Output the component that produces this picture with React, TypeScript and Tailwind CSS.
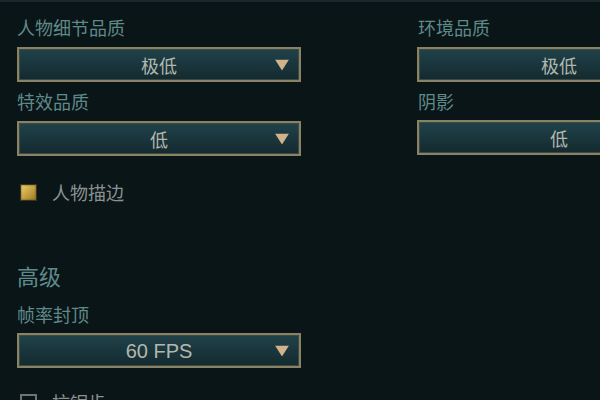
const font = { fontFamily: '"Noto Sans CJK SC", "Noto Sans", sans-serif' };

function Dropdown({ value, latin = false }: { value: string; latin?: boolean }) {
  return (
    <div className="relative flex h-[35px] w-[284px] shrink-0 items-center justify-center border-2 border-[#8a8264] bg-gradient-to-b from-[#21424a] to-[#132a2f] shadow-[inset_0_0_0_1px_#3c4a44]">
      <span
        className={
          latin
            ? "text-[20px] leading-[24px] text-[#b3b8ae]"
            : "text-[18px] leading-[24px] text-[#b3b8ae]"
        }
        style={latin ? { fontFamily: '"Liberation Sans", Arial, sans-serif' } : undefined}
      >
        {value}
      </span>
      <svg
        className="absolute right-[10px] top-1/2 -translate-y-1/2"
        width="14"
        height="11"
        viewBox="0 0 14 11"
      >
        <polygon points="0,0 14,0 7,11" fill="#d2b28a" />
      </svg>
    </div>
  );
}

function Label({ text, className = "" }: { text: string; className?: string }) {
  return (
    <div className={"h-[24px] text-[18px] leading-[24px] text-[#5f8a8a] " + className}>{text}</div>
  );
}

export default function App() {
  return (
    <div
      className="h-[400px] w-[600px] overflow-hidden border-t-2 border-[#1a282b] bg-[#0a1517] px-[17px] pt-[13px]"
      style={font}
    >
      <div className="flex gap-[116px]">
        <div className="flex w-[284px] shrink-0 flex-col">
          <Label text="人物细节品质" />
          <div className="mt-[8px]">
            <Dropdown value="极低" />
          </div>
          <Label text="特效品质" className="mt-[7px]" />
          <div className="mt-[8px]">
            <Dropdown value="低" />
          </div>
          <div className="mt-[24px] flex h-[24px] items-center gap-[15px] pl-[3px]">
            <div className="h-[17px] w-[17px] border border-[#3a3320] bg-gradient-to-br from-[#f0cf68] to-[#9c7a22] shadow-[inset_0_0_2px_#5a4512]" />
            <span className="text-[18px] leading-[24px] text-[#8a9291]">人物描边</span>
          </div>
          <div className="mt-[57px] h-[28px] text-[22px] leading-[28px] text-[#5f8a8a]">高级</div>
          <Label text="帧率封顶" className="mt-[13px]" />
          <div className="mt-[7px]">
            <Dropdown value="60 FPS" latin />
          </div>
          <div className="mt-[22px] flex h-[24px] items-center gap-[15px] pl-[3px]">
            <div className="h-[17px] w-[17px] border-2 border-[#6d7472] bg-[#0a1517]" />
            <span className="text-[18px] leading-[24px] text-[#8a9291]">抗锯齿</span>
          </div>
        </div>
        <div className="flex w-[284px] shrink-0 flex-col">
          <Label text="环境品质" className="pl-[1px]" />
          <div className="mt-[8px]">
            <Dropdown value="极低" />
          </div>
          <Label text="阴影" className="mt-[7px] pl-[1px]" />
          <div className="mt-[7px]">
            <Dropdown value="低" />
          </div>
        </div>
      </div>
    </div>
  );
}
